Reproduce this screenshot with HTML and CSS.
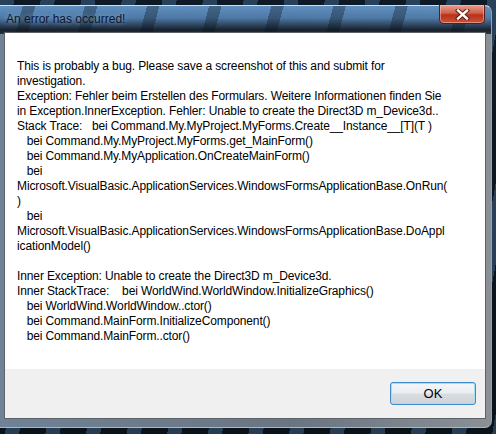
FILE: index.html
```
<!DOCTYPE html>
<html>
<head>
    <link rel="stylesheet" href="styles.css">
</head>
<body>
    <div class="window">
        <div class="titlebar">
            <span class="title">An error has occurred!</span>
            <button class="close" aria-label="Close">
                <svg width="15" height="11" viewBox="0 0 15 11">
                    <path d="M3 1.5 L12 9.5 M12 1.5 L3 9.5" stroke="#4a1a14" stroke-width="4.2" stroke-linecap="square"/>
                    <path d="M3 1.5 L12 9.5 M12 1.5 L3 9.5" stroke="#ffffff" stroke-width="2.4" stroke-linecap="square"/>
                </svg>
            </button>
        </div>
        <div class="client">
            <div class="message">
<div class="line">This is probably a bug. Please save a screenshot of this and submit for</div>
<div class="line">investigation.</div>
<div class="line">Exception: Fehler beim Erstellen des Formulars. Weitere Informationen finden Sie</div>
<div class="line">in Exception.InnerException. Fehler: Unable to create the Direct3D m_Device3d..</div>
<div class="line">Stack Trace:   bei Command.My.MyProject.MyForms.Create__Instance__[T](T )</div>
<div class="line">   bei Command.My.MyProject.MyForms.get_MainForm()</div>
<div class="line">   bei Command.My.MyApplication.OnCreateMainForm()</div>
<div class="line">   bei</div>
<div class="line">Microsoft.VisualBasic.ApplicationServices.WindowsFormsApplicationBase.OnRun(</div>
<div class="line">)</div>
<div class="line">   bei</div>
<div class="line">Microsoft.VisualBasic.ApplicationServices.WindowsFormsApplicationBase.DoAppl</div>
<div class="line">icationModel()</div>
<div class="line"> </div>
<div class="line">Inner Exception: Unable to create the Direct3D m_Device3d.</div>
<div class="line">Inner StackTrace:    bei WorldWind.WorldWindow.InitializeGraphics()</div>
<div class="line">   bei WorldWind.WorldWindow..ctor()</div>
<div class="line">   bei Command.MainForm.InitializeComponent()</div>
<div class="line">   bei Command.MainForm..ctor()</div>
            </div>
            <div class="footer">
                <button class="ok">OK</button>
            </div>
        </div>
    </div>
</body>
</html>
```

FILE: styles.css
```
body {
    margin: 0;
    width: 496px;
    height: 434px;
    overflow: hidden;
    font-family: 'Liberation Sans', Arial, sans-serif;
    background:
        repeating-linear-gradient(100deg, rgba(90,140,190,0.35) 0 14px, rgba(0,0,0,0) 14px 40px),
        linear-gradient(180deg, #0e1a26, #0a121a);
}

.window {
    width: 492px;
    height: 423px;
    margin-top: 5px;
    box-sizing: border-box;
    padding: 0 5px 8px 4px;
    display: flex;
    flex-direction: column;
    border-top: 1px solid #d8dde2;
    border-right: 1px solid #9aa2aa;
    border-bottom: 1px solid #b0b6bc;
    border-radius: 0 7px 7px 0;
    background:
        repeating-linear-gradient(105deg, rgba(0,0,0,0) 0 22px, rgba(10,20,30,0.35) 22px 34px, rgba(0,0,0,0) 34px 60px),
        linear-gradient(180deg, rgba(95,145,195,0.95) 0px, rgba(75,120,168,0.9) 12px, rgba(18,28,40,0.95) 24px, rgba(40,48,56,0.95) 28px),
        linear-gradient(90deg, #6f8296, #6a7582 60%, #8a9096);
    background-size: 100% 26px, 100% 28px, 100% 100%;
    background-repeat: no-repeat;
}

.titlebar {
    height: 26px;
    display: flex;
    align-items: flex-start;
    justify-content: space-between;
    flex-shrink: 0;
}

.title {
    margin-top: 6px;
    margin-left: 2px;
    font-size: 12px;
    color: #0a1632;
    text-shadow: 0 0 5px rgba(200,220,240,0.6);
}

.close {
    width: 46px;
    height: 19px;
    margin-top: -1px;
    margin-right: 1px;
    padding: 0;
    border: 1px solid #5a1e18;
    border-top: none;
    border-radius: 0 0 5px 5px;
    background: linear-gradient(180deg, #e8a090 0%, #d06048 45%, #b8301c 55%, #c85438 100%);
    box-shadow: inset 0 0 0 1px rgba(255,200,190,0.5);
    display: flex;
    align-items: center;
    justify-content: center;
}

.client {
    flex: 1;
    display: flex;
    flex-direction: column;
    border: 1px solid #5c6268;
    background: #ffffff;
}

.message {
    flex: 1;
    padding: 26px 0 0 12px;
    font-size: 12px;
    line-height: 15px;
    letter-spacing: -0.12px;
    color: #000000;
}

.line {
    white-space: pre;
    height: 15px;
}

.footer {
    height: 49px;
    background: #f0f0f0;
    display: flex;
    justify-content: flex-end;
    align-items: center;
    padding-right: 9px;
}

.ok {
    width: 86px;
    height: 23px;
    border: 1px solid #3c8ccc;
    border-radius: 3px;
    background: linear-gradient(180deg, #f4f6f8 0%, #eaeef2 48%, #d8dde2 52%, #cdd3d8 100%);
    box-shadow: inset 0 0 0 1px #a8dcf6;
    font-family: 'Liberation Sans', Arial, sans-serif;
    font-size: 13px;
    color: #000000;
    padding: 0;
}
```
